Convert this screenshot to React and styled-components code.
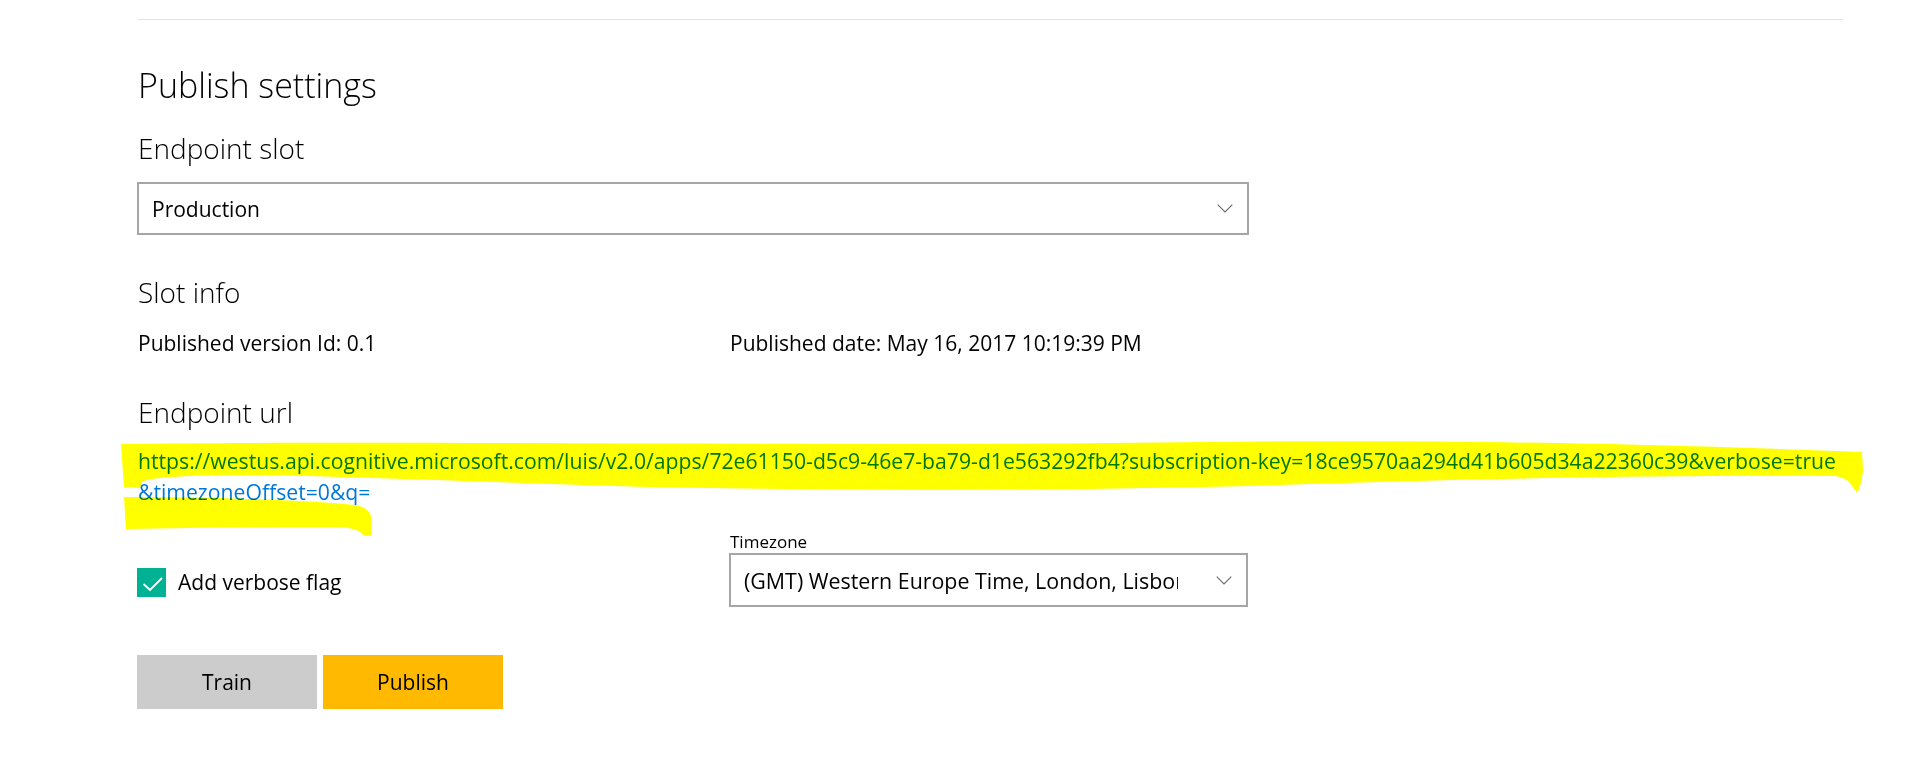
import React from 'react';
import styled, { createGlobalStyle } from 'styled-components';

const GlobalStyle = createGlobalStyle`
  html, body { margin: 0; padding: 0; background: #ffffff; }
  body { font-family: "Open Sans", "Noto Sans", sans-serif; color: #000000; }
  * { box-sizing: border-box; }
`;

const Page = styled.div`
  position: relative;
  width: 1916px;
  height: 764px;
  padding: 19px 73px 0 138px;
  overflow: hidden;
`;

const Divider = styled.div`
  height: 1px;
  background: #e3e3e3;
`;

const Title = styled.h1`
  margin: 45px 0 0;
  font-size: 34px;
  font-weight: 350;
  line-height: 40px;
`;

const Heading = styled.h2`
  margin: ${p => p.$gap}px 0 0;
  font-size: 28px;
  font-weight: 350;
  line-height: 36px;
`;

const Select = styled.div`
  margin-top: ${p => p.$gap || 0}px;
  width: ${p => p.$width}px;
  height: ${p => p.$height}px;
  margin-left: -1px;
  border: 2px solid #a6a6a6;
  background: #fff;
  display: flex;
  align-items: center;
  padding: 0 14px 0 13px;
  gap: 12px;
  font-size: ${p => p.$size || 21}px;
`;

const SelectText = styled.span`
  flex: 1;
  white-space: nowrap;
  overflow: hidden;
  margin-right: ${p => p.$trail || 0}px;
`;

const Chevron = () => (
  <svg width="16" height="9" viewBox="0 0 16 9">
    <polyline points="0.7,0.7 8,8 15.3,0.7" fill="none" stroke="#6b6b6b" strokeWidth="1.1" />
  </svg>
);

const TwoCol = styled.div`
  margin-top: ${p => p.$gap}px;
  display: grid;
  grid-template-columns: 592px 518px;
  align-items: ${p => p.$align || 'start'};
`;

const InfoText = styled.div`
  font-size: 21px;
  line-height: 28px;
`;

const UrlBlock = styled.div`
  margin-top: 15px;
  font-size: 21.2px;
  line-height: 31px;
`;

const UrlLink = styled.a`
  color: #0078d7;
  text-decoration: none;
`;

const CheckRow = styled.label`
  display: flex;
  align-items: center;
  gap: 12px;
  height: 54px;
  padding-top: 4px;
  font-size: 21px;
`;

const CheckBox = styled.span`
  width: 29px;
  height: 29px;
  background: #00b294;
  display: flex;
  align-items: center;
  justify-content: center;
  margin-left: -1px;
`;

const Field = styled.div`
  display: flex;
  flex-direction: column;
`;

const FieldLabel = styled.div`
  font-size: 17px;
  line-height: 20px;
  margin-bottom: 1px;
`;

const Buttons = styled.div`
  margin-top: 48px;
  display: flex;
  gap: 6px;
  margin-left: -1px;
`;

const Button = styled.button`
  width: 180px;
  height: 54px;
  border: 0;
  padding: 0;
  background: ${p => (p.$primary ? '#ffb900' : '#cccccc')};
  font-family: "Open Sans", "Noto Sans", sans-serif;
  font-size: 21px;
  color: #000;
`;

const Highlight = styled.svg`
  position: absolute;
  left: 0;
  top: 0;
  pointer-events: none;
  mix-blend-mode: multiply;
`;

export default function App() {
  return (
    <>
      <GlobalStyle />
      <Page>
        <Divider />
        <Title>Publish settings</Title>
        <Heading $gap={25}>Endpoint slot</Heading>
        <Select $gap={16} $width={1112} $height={53}>
          <SelectText>Production</SelectText>
          <Chevron />
        </Select>
        <Heading $gap={39}>Slot info</Heading>
        <TwoCol $gap={19}>
          <InfoText>Published version Id: 0.1</InfoText>
          <InfoText>Published date: May 16, 2017 10:19:39 PM</InfoText>
        </TwoCol>
        <Heading $gap={37}>Endpoint url</Heading>
        <UrlBlock>
          <UrlLink href="#">
            https://westus.api.cognitive.microsoft.com/luis/v2.0/apps/72e61150-d5c9-46e7-ba79-d1e563292fb4?subscription-key=18ce9570aa294d41b605d34a22360c39&amp;verbose=true
            <br />
            &amp;timezoneOffset=0&amp;q=
          </UrlLink>
        </UrlBlock>
        <TwoCol $gap={25} $align="end">
          <CheckRow>
            <CheckBox>
              <svg width="29" height="29" viewBox="0 0 29 29">
                <polyline points="6.5,16 13,22 25,10" fill="none" stroke="#ffffff" strokeWidth="1.8" />
              </svg>
            </CheckBox>
            Add verbose flag
          </CheckRow>
          <Field>
            <FieldLabel>Timezone</FieldLabel>
            <Select $width={519} $height={54} $size={21.4}>
              <SelectText $trail={26}>(GMT) Western Europe Time, London, Lisbon, Casablanca</SelectText>
              <Chevron />
            </Select>
          </Field>
        </TwoCol>
        <Buttons>
          <Button>Train</Button>
          <Button $primary>Publish</Button>
        </Buttons>
        <Highlight width="1916" height="764" viewBox="0 0 1916 764">
          <path
            fill="#ffff00"
            d="M 121 444 C 400 440, 900 447, 1200 442 C 1500 439, 1700 446, 1862 452 L 1863 470 C 1862 480, 1860 488, 1857 493 L 1852 486 C 1848 480, 1843 477, 1835 476 C 1650 475, 1450 479, 1250 486 C 1050 491, 850 491, 650 487 C 500 483, 380 477, 250 475 C 190 475, 150 477, 142 482 L 140 488 L 124 487 Z"
          />
          <path
            fill="#ffff00"
            d="M 124 497 C 220 497, 300 500, 355 505 C 366 507, 371 512, 372 520 L 371 536 L 363 535 C 360 530, 352 527, 330 527 C 260 527, 190 528, 126 529 Z"
          />
        </Highlight>
      </Page>
    </>
  );
}
